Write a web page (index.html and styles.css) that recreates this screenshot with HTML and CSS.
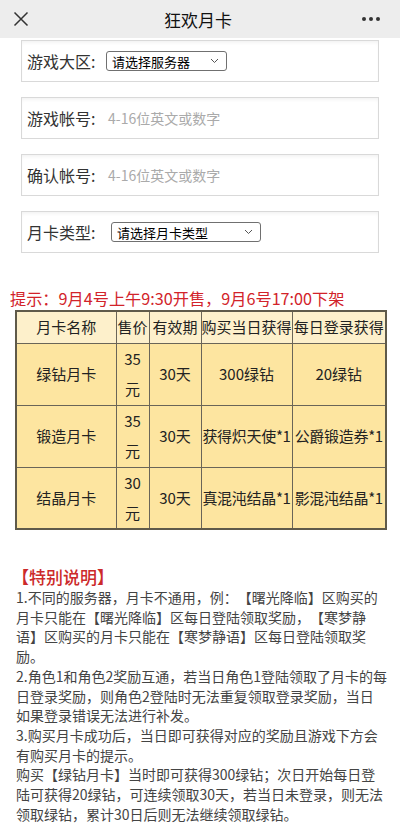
FILE: index.html
```html
<!DOCTYPE html>
<html lang="zh-CN">
<head>
<meta charset="utf-8">
<title>狂欢月卡</title>
<link rel="stylesheet" href="styles.css">
</head>
<body>
<header class="topbar">
  <svg class="icon-close" width="16" height="16" viewBox="0 0 16 16"><path d="M1.5 1.5 L14.5 14.5 M14.5 1.5 L1.5 14.5" stroke="#333" stroke-width="1.5" fill="none"/></svg>
  <h1 class="title">狂欢月卡</h1>
  <svg class="icon-more" width="20" height="6" viewBox="0 0 20 6"><circle cx="3" cy="3" r="2" fill="#333"/><circle cx="10" cy="3" r="2" fill="#333"/><circle cx="17" cy="3" r="2" fill="#333"/></svg>
</header>

<main class="page">
  <section class="form">
    <div class="field">
      <span class="label">游戏大区:</span>
      <div class="select select-server"><span>请选择服务器</span><svg width="9" height="6" viewBox="0 0 9 6"><path d="M1 1 L4.5 4.5 L8 1" stroke="#555" stroke-width="1" fill="none"/></svg></div>
    </div>
    <div class="field">
      <span class="label">游戏帐号:</span>
      <span class="placeholder">4-16位英文或数字</span>
    </div>
    <div class="field">
      <span class="label">确认帐号:</span>
      <span class="placeholder">4-16位英文或数字</span>
    </div>
    <div class="field">
      <span class="label">月卡类型:</span>
      <div class="select select-card"><span>请选择月卡类型</span><svg width="9" height="6" viewBox="0 0 9 6"><path d="M1 1 L4.5 4.5 L8 1" stroke="#555" stroke-width="1" fill="none"/></svg></div>
    </div>
  </section>

  <p class="tip">提示：9月4号上午9:30开售，9月6号17:00下架</p>

  <table class="cards">
    <colgroup>
      <col class="c1"><col class="c2"><col class="c3"><col class="c4"><col class="c5">
    </colgroup>
    <thead>
      <tr><th>月卡名称</th><th>售价</th><th>有效期</th><th>购买当日获得</th><th>每日登录获得</th></tr>
    </thead>
    <tbody>
      <tr><td>绿钻月卡</td><td>35<br>元</td><td>30天</td><td>300绿钻</td><td>20绿钻</td></tr>
      <tr><td>锻造月卡</td><td>35<br>元</td><td>30天</td><td class="tight">获得炽天使*1</td><td class="tight">公爵锻造券*1</td></tr>
      <tr><td>结晶月卡</td><td>30<br>元</td><td>30天</td><td class="tight">真混沌结晶*1</td><td class="tight">影混沌结晶*1</td></tr>
    </tbody>
  </table>

  <section class="notes">
    <h2 class="notes-title">【特别说明】</h2>
    <p>1.不同的服务器，月卡不通用，例：【曙光降临】区购买的月卡只能在【曙光降临】区每日登陆领取奖励，【寒梦静语】区购买的月卡只能在【寒梦静语】区每日登陆领取奖励。</p>
    <p>2.角色1和角色2奖励互通，若当日角色1登陆领取了月卡的每日登录奖励，则角色2登陆时无法重复领取登录奖励，当日<span class="nobr">如果</span>登录错误无法进行补发。</p>
    <p>3.购买月卡成功后，当日即可获得对应的奖励且游戏下方会有购买月卡的提示。</p>
    <p>购买【绿钻月卡】当时即可获得300绿钻；次日开始每日登陆可获得20绿钻，可连续领取30天，若当日未登录，则无法领取绿钻，累计30日后则无法继续领取绿钻。</p>
  </section>
</main>
</body>
</html>
```

FILE: styles.css
```css
* { box-sizing: border-box; }
html, body { margin: 0; padding: 0; }
body {
  font-family: "Noto Sans CJK SC", "Noto Sans", sans-serif;
  background: #fff;
  color: #333;
  width: 400px;
  text-spacing-trim: space-all;
}
.topbar {
  height: 38px;
  background: #ededed;
  display: flex;
  align-items: center;
  justify-content: space-between;
  padding: 0 19px 0 13px;
}
.title {
  margin: 0;
  font-size: 17px;
  font-weight: 400;
  color: #111;
  position: relative;
  left: 3px;
}
.icon-close { display: block; }
.icon-more { display: block; }

.page { padding: 0; }
.form {
  padding: 2px 21px 0 21px;
  display: flex;
  flex-direction: column;
  gap: 15px;
}
.field {
  height: 42px;
  border: 1px solid #d9d9d9;
  background: #fff;
  box-shadow: inset 0 3px 4px -2px rgba(0,0,0,0.07);
  display: flex;
  align-items: center;
  padding-left: 5px;
}
.label {
  font-size: 16px;
  color: #333;
  width: 80px;
  flex: none;
}
.placeholder {
  font-size: 14px;
  color: #aaa;
  margin-left: 1px;
}
.select {
  height: 20px;
  border: 1px solid #707070;
  border-radius: 3px;
  display: flex;
  align-items: center;
  justify-content: space-between;
  font-size: 13px;
  color: #000;
  padding: 0 7px 0 5px;
}
.select-server { width: 121px; margin-left: -1px; }
.select-card { width: 150px; margin-left: 4px; }

.tip {
  margin: 34px 0 0 10px;
  font-size: 16.2px;
  line-height: 22px;
  color: #d2232a;
  font-weight: 400;
}
.cards {
  margin: 1px 0 0 15px;
  width: 370px;
  table-layout: fixed;
  border-collapse: collapse;
  border: 2px solid #5f5a4a;
  font-size: 15px;
  color: #222;
}
.cards .c1 { width: 100px; }
.cards .c2 { width: 33px; }
.cards .c3 { width: 52px; }
.cards .c4 { width: 91px; }
.cards .c5 { width: 94px; }
.cards th, .cards td {
  border: 1px solid #6a6558;
  padding: 0;
  text-align: center;
  line-height: 30px;
  font-weight: 400;
}
.cards th { background: #fdf0cb; height: 32px; white-space: nowrap; }
.cards td { background: #fde5a0; height: 62px; }
.cards td.tight { white-space: nowrap; letter-spacing: -0.3px; overflow: visible; }

.notes { padding: 0 0 0 16px; width: 388px; }
.notes-title {
  margin: 36px 0 0 -4px;
  font-size: 17px;
  line-height: 22px;
  font-weight: 500;
  color: #cc2a2a;
}
.notes p {
  margin: 0;
  font-size: 14px;
  line-height: 19.7px;
  color: #444;
}
.nobr { white-space: nowrap; }
```
